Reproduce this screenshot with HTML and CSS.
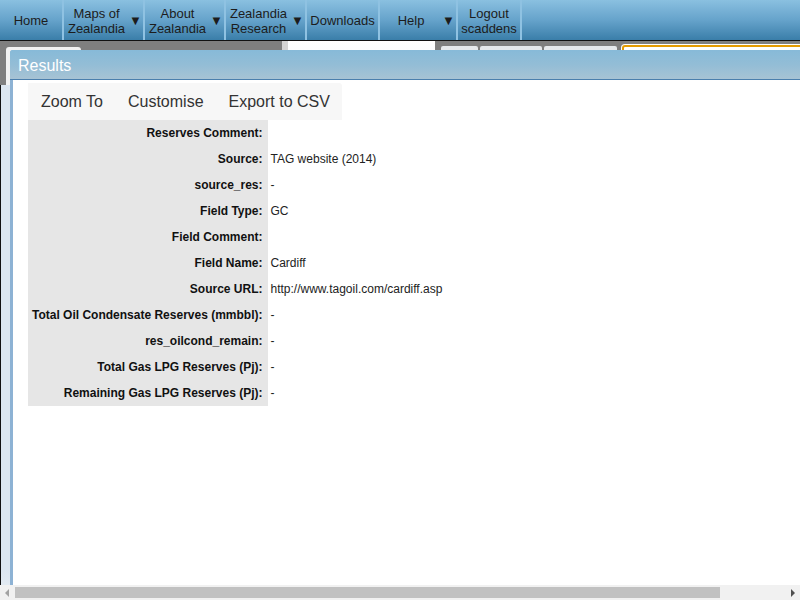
FILE: index.html
```html
<!DOCTYPE html>
<html>
<head>
<meta charset="utf-8">
<link rel="stylesheet" href="styles.css">
</head>
<body>
<nav class="nav">
  <div class="nav-item w63">Home</div>
  <div class="nav-item w81 has-arrow"><span class="lbl">Maps of<br>Zealandia</span><span class="arrow">&#9660;</span></div>
  <div class="nav-item w81 has-arrow"><span class="lbl">About<br>Zealandia</span><span class="arrow">&#9660;</span></div>
  <div class="nav-item w81 has-arrow"><span class="lbl">Zealandia<br>Research</span><span class="arrow">&#9660;</span></div>
  <div class="nav-item w73">Downloads</div>
  <div class="nav-item w78 has-arrow"><span class="lbl">Help</span><span class="arrow">&#9660;</span></div>
  <div class="nav-item w63">Logout<br>scaddens</div>
  <div class="nav-rest"></div>
</nav>
<div class="appbar">
  <div class="bar-left">
    <div class="btn-white"></div>
  </div>
  <div class="bar-split"></div>
  <div class="bar-input"></div>
  <div class="bar-tabs">
    <div class="tab t1"></div>
    <div class="tab t2"></div>
    <div class="tab t3"></div>
  </div>
  <div class="bar-search"></div>
</div>
<div class="workspace">
  <div class="side"><span class="collapse"></span></div>
  <div class="main"></div>
</div>

<section class="dialog">
  <header class="dialog-head">Results</header>
  <div class="dialog-body">
    <div class="tools">
      <span class="tool">Zoom To</span>
      <span class="tool">Customise</span>
      <span class="tool">Export to CSV</span>
    </div>
    <table class="attrs">
      <tr><th>Reserves Comment:</th><td></td></tr>
      <tr><th>Source:</th><td>TAG website (2014)</td></tr>
      <tr><th>source_res:</th><td>-</td></tr>
      <tr><th>Field Type:</th><td>GC</td></tr>
      <tr><th>Field Comment:</th><td></td></tr>
      <tr><th>Field Name:</th><td>Cardiff</td></tr>
      <tr><th>Source URL:</th><td>http://www.tagoil.com/cardiff.asp</td></tr>
      <tr><th>Total Oil Condensate Reserves (mmbbl):</th><td>-</td></tr>
      <tr><th>res_oilcond_remain:</th><td>-</td></tr>
      <tr><th>Total Gas LPG Reserves (Pj):</th><td>-</td></tr>
      <tr><th>Remaining Gas LPG Reserves (Pj):</th><td>-</td></tr>
    </table>
  </div>
</section>

<div class="hscroll">
  <span class="sarrow left"></span>
  <div class="thumb"></div>
  <span class="sarrow right"></span>
</div>
</body>
</html>
```

FILE: styles.css
```css
html, body {
  margin: 0;
  padding: 0;
}
body {
  width: 800px;
  height: 600px;
  overflow: hidden;
  position: relative;
  font-family: "Liberation Sans", Arial, sans-serif;
  background: #ffffff;
}

/* top navigation */
.nav {
  display: flex;
  height: 40px;
  background: linear-gradient(to bottom, #8ac0e0 0%, #66a3cb 50%, #3a7ea9 100%);
}
.nav-item {
  box-sizing: border-box;
  height: 40px;
  padding-top: 1px;
  display: flex;
  align-items: center;
  justify-content: center;
  text-align: center;
  font-size: 13px;
  line-height: 15px;
  color: #1c1c1c;
  border-right: 2px solid #8fc2e2;
}
.w63 { width: 64px; }
.w81 { width: 81px; }
.w73 { width: 73px; }
.w78 { width: 78px; }
.has-arrow {
  justify-content: space-between;
  padding-left: 0;
  padding-right: 2px;
}
.has-arrow .lbl {
  flex: 1;
}
.arrow {
  font-size: 13px;
  width: 12px;
  text-align: center;
}
.nav-rest {
  flex: 1;
}

/* app bar under nav (mostly hidden behind the dialog) */
.appbar {
  display: flex;
  align-items: flex-end;
  height: 45px;
  background: #7f7f7f;
  border-top: 1px solid #111;
  box-sizing: border-box;
}
.bar-left {
  width: 282px;
  height: 44px;
  display: flex;
  align-items: flex-end;
  padding-left: 6px;
  box-sizing: border-box;
}
.btn-white {
  width: 75px;
  height: 38px;
  background: #f2f2f2;
  border-radius: 3px 3px 0 0;
}
.bar-split {
  width: 6px;
  height: 44px;
  background: #d4d4d4;
}
.bar-input {
  width: 147px;
  height: 44px;
  background: linear-gradient(#ffffff, #eef3f8);
}
.bar-tabs {
  display: flex;
  gap: 2px;
  margin-left: 6px;
  height: 39px;
}
.tab {
  background: #e6e9ec;
  border-radius: 2px 2px 0 0;
  height: 39px;
}
.t1 { width: 37px; }
.t2 { width: 62px; }
.t3 { width: 73px; }
.bar-search {
  margin-left: 5px;
  flex: 1;
  height: 40px;
  background: #fff;
  border: 2px solid #e59b00;
  border-right: 0;
  border-bottom: 0;
  border-radius: 3px 0 0 0;
  box-shadow: 0 0 0 1px #fff;
  box-sizing: border-box;
}

.workspace {
  display: flex;
  height: 515px;
}
.side {
  width: 9px;
  border-left: 1px solid #111;
  background: linear-gradient(to bottom, #dce6f0 0%, #dce6f0 94%, #e8eef4 100%);
  position: relative;
}
.collapse {
  position: absolute;
  left: 4px;
  bottom: 3px;
  width: 0;
  height: 0;
  border-top: 4px solid transparent;
  border-bottom: 4px solid transparent;
  border-right: 4px solid #8a8f96;
}
.main {
  flex: 1;
  background: #fff;
}

/* results dialog */
.dialog {
  position: absolute;
  left: 10px;
  top: 50px;
  width: 800px;
  height: 535px;
  background: #fff;
  border-left: 3px solid #8db2d4;
  border-radius: 3px 0 0 0;
  box-sizing: border-box;
  display: flex;
  flex-direction: column;
}
.dialog-head {
  height: 29px;
  line-height: 31px;
  font-size: 16px;
  color: #ffffff;
  background: linear-gradient(to bottom, #87bad8 0%, #93bdd6 50%, #a7c3d4 100%);
  border-bottom: 1px solid #4b7fad;
  border-radius: 3px 0 0 0;
  margin-left: -3px;
  padding-left: 8px;
}
.dialog-body {
  flex: 1;
  padding: 3px 0 0 15px;
}
.tools {
  display: inline-flex;
  height: 37px;
  align-items: center;
  background: #f7f7f7;
  border-radius: 0 3px 0 0;
}
.tool {
  padding: 0 12px 0 13px;
  font-size: 16px;
  color: #333;
}
.attrs {
  border-collapse: collapse;
  font-size: 12px;
}
.attrs tr {
  height: 26px;
}
.attrs th {
  width: 239px;
  box-sizing: border-box;
  background: #e6e6e6;
  text-align: right;
  font-weight: bold;
  color: #111;
  padding: 0 5px 0 4px;
  white-space: nowrap;
}
.attrs td {
  padding: 0 3px;
  color: #222;
  white-space: nowrap;
}

/* horizontal scrollbar */
.hscroll {
  position: absolute;
  left: 0;
  bottom: 0;
  width: 800px;
  height: 15px;
  background: #f1f1f1;
}
.thumb {
  position: absolute;
  left: 15px;
  top: 2px;
  width: 705px;
  height: 11px;
  background: #c1c1c1;
}
.sarrow {
  position: absolute;
  top: 4px;
  width: 0;
  height: 0;
  border-top: 4px solid transparent;
  border-bottom: 4px solid transparent;
}
.sarrow.left {
  left: 5px;
  border-right: 4px solid #a3a3a3;
}
.sarrow.right {
  right: 5px;
  border-left: 4px solid #505050;
}
```
